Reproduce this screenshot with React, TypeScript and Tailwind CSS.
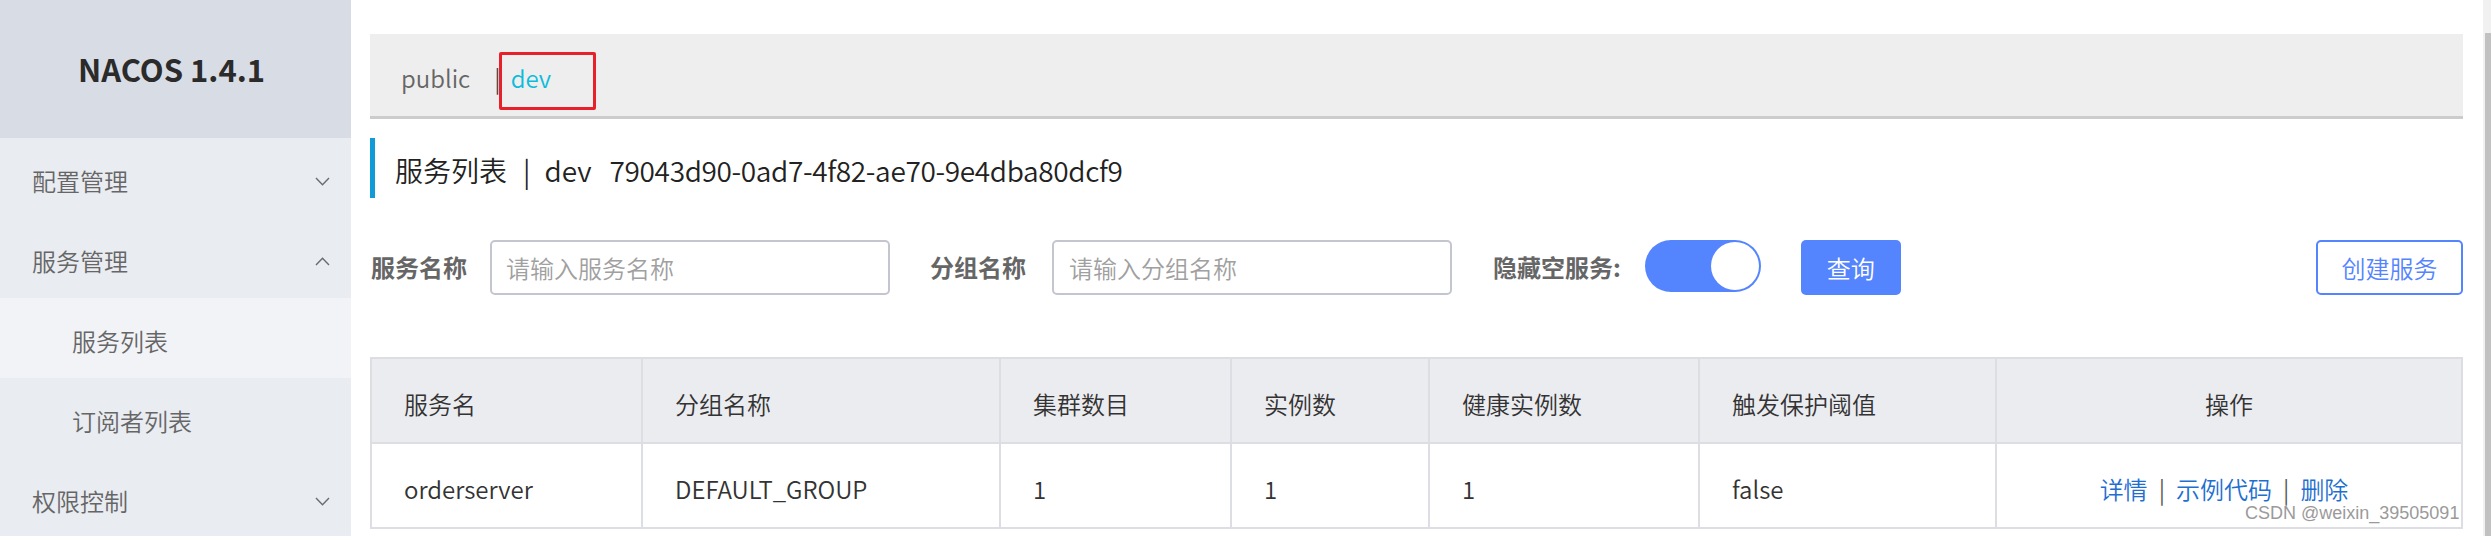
const Chevron = ({ up = false }: { up?: boolean }) => (
  <svg width="15" height="9" viewBox="0 0 15 9" fill="none" stroke="#6b6b6b" strokeWidth="1.4">
    <polyline points={up ? "1,8 7.5,1.2 14,8" : "1,1 7.5,7.8 14,1"} />
  </svg>
);

const columns = [
  { title: "服务名", width: "w-[271px]" },
  { title: "分组名称", width: "w-[358px]" },
  { title: "集群数目", width: "w-[231px]" },
  { title: "实例数", width: "w-[198px]" },
  { title: "健康实例数", width: "w-[270px]" },
  { title: "触发保护阈值", width: "w-[297px]" },
];

const row = ["orderserver", "DEFAULT_GROUP", "1", "1", "1", "false"];

export default function App() {
  return (
    <div className="relative flex w-[2491px] h-[536px] overflow-hidden bg-white font-['Noto_Sans_CJK_SC',sans-serif] font-[350]">
      {/* Sidebar */}
      <aside className="w-[351px] shrink-0 bg-[#e9ecf1] flex flex-col text-[24px] text-[#666]">
        <div className="h-[138px] shrink-0 bg-[#d8dde5] flex items-center justify-center text-[31px] font-bold text-[#2b2b2b] pr-[8px]">
          NACOS 1.4.1
        </div>
        <div className="h-[80px] shrink-0 flex items-center justify-between pl-[32px] pr-[21px] pt-[6px]">
          <span>配置管理</span>
          <Chevron />
        </div>
        <div className="h-[80px] shrink-0 flex items-center justify-between pl-[32px] pr-[21px] pt-[6px]">
          <span>服务管理</span>
          <Chevron up />
        </div>
        <div className="h-[80px] shrink-0 flex items-center pl-[72px] pt-[6px] bg-[#f1f3f6]">
          服务列表
        </div>
        <div className="h-[80px] shrink-0 flex items-center pl-[72px] pt-[6px]">
          订阅者列表
        </div>
        <div className="h-[80px] shrink-0 flex items-center justify-between pl-[32px] pr-[21px] pt-[6px]">
          <span>权限控制</span>
          <Chevron />
        </div>
      </aside>

      {/* Main */}
      <main className="flex-1 pl-[19px] pr-[20px] pt-[34px] flex flex-col">
        {/* Namespace bar */}
        <div className="relative h-[85px] shrink-0 bg-[#eeeeee] border-b-[3px] border-[#cccccc] flex items-center pl-[31px] pt-[6px] text-[24px]">
          <span className="text-[#666]">public</span>
          <span className="ml-[24px] text-[#444]">|</span>
          <span className="ml-[10px] text-[#0dbcdb]">dev</span>
          <div className="absolute left-[129px] top-[18px] w-[97px] h-[58px] border-[3px] border-[#e8202a] rounded-[2px]" />
        </div>

        {/* Title */}
        <div className="mt-[19px] h-[60px] shrink-0 border-l-[5px] border-[#109bd6] flex items-center pl-[20px] pt-[4px] text-[28px] text-[#222]">
          <span>服务列表</span>
          <span className="ml-[16px] mr-[14px]">|</span>
          <span>dev</span>
          <span className="ml-[18px] tracking-[-0.35px]">79043d90-0ad7-4f82-ae70-9e4dba80dcf9</span>
        </div>

        {/* Filter row */}
        <div className="mt-[41px] h-[56px] shrink-0 flex items-center text-[24px]">
          <span className="font-bold text-[#666] pl-[1px]">服务名称</span>
          <div className="ml-[23px] w-[400px] h-[55px] border-2 border-[#c4c6cf] rounded-[5px] flex items-center pl-[14px] pt-[2px] text-[#a0a0a0]">
            请输入服务名称
          </div>
          <span className="ml-[40px] font-bold text-[#666]">分组名称</span>
          <div className="ml-[26px] w-[400px] h-[55px] border-2 border-[#c4c6cf] rounded-[5px] flex items-center pl-[15px] pt-[2px] text-[#a0a0a0]">
            请输入分组名称
          </div>
          <span className="ml-[41px] font-bold text-[#666]">隐藏空服务:</span>
          <div className="ml-[24px] w-[116px] h-[52px] rounded-full bg-[#5584ff] flex items-center justify-end pr-[2px] -mt-[3px]">
            <div className="w-[48px] h-[48px] rounded-full bg-white" />
          </div>
          <button className="ml-[40px] w-[100px] h-[55px] rounded-[5px] bg-[#5584ff] text-white pt-[2px]">
            查询
          </button>
          <button className="ml-auto w-[147px] h-[55px] rounded-[5px] border-2 border-[#5584ff] bg-white text-[#5584ff] pt-[2px]">
            创建服务
          </button>
        </div>

        {/* Table */}
        <table className="mt-[62px] w-[2093px] border-collapse text-[24px] text-[#333] table-fixed">
          <thead>
            <tr className="bg-[#ebecf0] h-[85px]">
              {columns.map((c) => (
                <th key={c.title} className={`${c.width} border-2 border-[#dcdee3] text-left font-[350] pl-[32px] pt-[6px]`}>
                  {c.title}
                </th>
              ))}
              <th className="border-2 border-[#dcdee3] font-[350] text-center pt-[6px]">操作</th>
            </tr>
          </thead>
          <tbody>
            <tr className="h-[85px]">
              {row.map((v, i) => (
                <td key={i} className="border-2 border-[#dcdee3] pl-[32px] pt-[6px]">
                  {v}
                </td>
              ))}
              <td className="border-2 border-[#dcdee3] text-center pt-[6px] pr-[10px]">
                <span className="text-[#1e6fd0]">详情</span>
                <span className="mx-[11px] text-[#555]">|</span>
                <span className="text-[#1e6fd0]">示例代码</span>
                <span className="mx-[11px] text-[#555]">|</span>
                <span className="text-[#1e6fd0]">删除</span>
              </td>
            </tr>
          </tbody>
        </table>
      </main>

      {/* Scrollbar */}
      <div className="w-[8px] shrink-0 bg-[#f1f1f1] flex flex-col pt-[33px] pl-[2px]">
        <div className="flex-1 bg-[#c1c1c1]" />
      </div>

      {/* Watermark */}
      <div className="absolute left-[2245px] top-[500px] text-[18px] text-[#9a9a9a] font-['Liberation_Sans',sans-serif] font-normal [text-shadow:0_0_2px_#fff]">
        CSDN @weixin_39505091
      </div>
    </div>
  );
}
